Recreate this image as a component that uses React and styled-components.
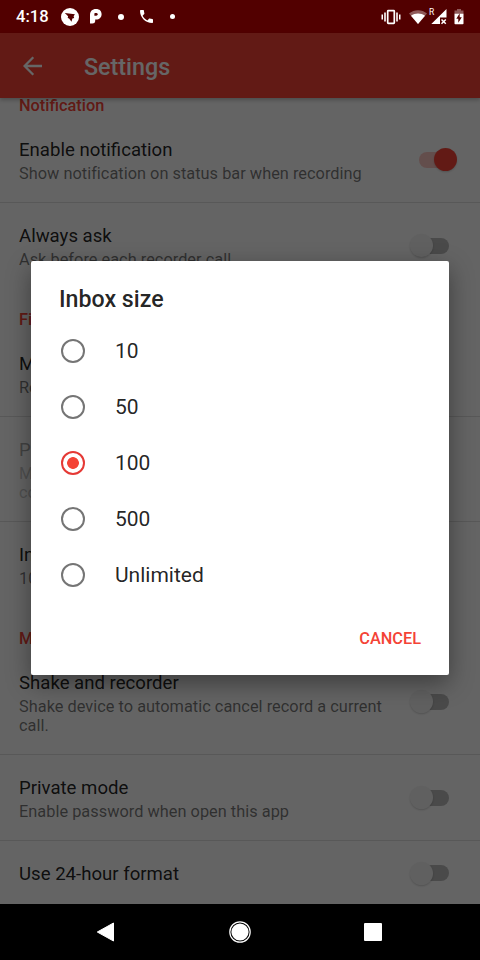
import React, { useState } from 'react'
import styled, { createGlobalStyle } from 'styled-components'

const sizes = ['10', '50', '100', '500', 'Unlimited']

const Toggle = ({ on }) => (
  <Track $on={on}>
    <Thumb $on={on} />
  </Track>
)

const Preference = ({ title, summary, toggle, on, tall, last, disabled }) => (
  <Row $tall={tall} $single={!summary} $last={last} $disabled={disabled}>
    <Labels>
      <RowTitle>{title}</RowTitle>
      {summary ? <Summary>{summary}</Summary> : null}
    </Labels>
    {toggle ? <Toggle on={on} /> : null}
  </Row>
)

const StatusIcons = () => (
  <StatusBar>
    <Clock>4:18</Clock>
    <svg width="18" height="18" viewBox="0 0 18 18">
      <circle cx="9" cy="9" r="9" fill="#fff" />
      <path d="M3.800 5 13.900 6.200 12.600 8.300l.6 1.600-1.800.6-.9 3.200-2.400-3.200-1.400-.5.4-1.800z" fill="#520000" />
    </svg>
    <PIcon width="12" height="15" viewBox="0 0 12 15">
      <path
        d="M0 6.200C0 2.200 2.200 0 6 0s5.600 2.200 5.600 5.300S9.300 10.600 6.200 10.600H5.200V12.200Q5 14.600 2.500 14.600H0z"
        fill="#fff"
      />
      <path d="M5 4h1.300a1.300 1.300 0 0 1 0 2.700H4.400V4.600z" fill="#520000" />
    </PIcon>
    <Dot $size={6} $left={16} />
    <PhoneIcon width="13" height="13" viewBox="3 3 18 18">
      <path
        d="M6.620 10.790c1.440 2.830 3.760 5.140 6.590 6.590l2.200-2.200c.27-.27.67-.36 1.020-.24 1.120.37 2.330.57 3.570.57.55 0 1 .45 1 1V20c0 .55-.45 1-1 1-9.390 0-17-7.610-17-17 0-.55.45-1 1-1h3.500c.55 0 1 .45 1 1 0 1.250.2 2.450.57 3.570.11.35.03.74-.25 1.020z"
        fill="#fff"
      />
    </PhoneIcon>
    <Dot $size={5} $left={17} />
    <Spacer />
    <svg width="20" height="16" viewBox="0 0 20 16" fill="#fff">
      <path d="M.5 5.500h1.500v5H.5zM3.200 3.500h1.600v9H3.200zM15.200 3.500h1.600v9h-1.600zM18 5.500h1.500v5H18z" />
      <rect x="6.700" y="1.700" width="6.600" height="12.600" rx=".6" fill="none" stroke="#fff" strokeWidth="1.700" />
    </svg>
    <WifiIcon width="18" height="14" viewBox="0 0 18 14">
      <path d="M0 3.500C5-1 13-1 18 3.500L9 14z" fill="#fff" opacity=".35" />
      <path d="M2 5.800c4-3.200 10-3.200 14 0L9 14z" fill="#fff" />
    </WifiIcon>
    <Signal>
      <Roaming>R</Roaming>
      <svg width="16" height="16" viewBox="0 0 16 16">
        <path d="M15.500 0v8.600H9V15H.3z" fill="#fff" />
        <path d="m10.500 10.500 4.300 4.300m0-4.300-4.300 4.300" stroke="#fff" strokeWidth="1.500" />
      </svg>
    </Signal>
    <BatteryIcon width="10" height="16" viewBox="0 0 10 16">
      <path d="M3 0h4v1.600h2.500V5H.5V1.600H3z" fill="#fff" opacity=".35" />
      <path d="M.5 4.800h9v9.700q0 .8-.8.800H1.300q-.8 0-.8-.8z" fill="#fff" />
      <path d="M5.700 4.200 2.300 9.800h2v4l3.500-5.600H5.700z" fill="#520000" />
    </BatteryIcon>
  </StatusBar>
)

export default function App() {
  const [size, setSize] = useState('100')

  return (
    <Phone>
      <GlobalStyle />
      <StatusIcons />
      <Screen>
        <AppBar>
          <svg width="20" height="20" viewBox="0 0 20 20">
            <path d="M19 10H2M10.300 1.300 1.600 10l8.700 8.700" fill="none" stroke="#fff" strokeWidth="2.300" />
          </svg>
          <Heading>Settings</Heading>
        </AppBar>
        <List>
          <Category $first>Notification</Category>
          <Preference
            title="Enable notification"
            summary="Show notification on status bar when recording"
            toggle
            on
          />
          <Preference title="Always ask" summary="Ask before each recorder call" toggle last />
          <Category>File</Category>
          <Preference title="M" summary="Re" />
          <Preference title="P" summary={<>M<br />co</>} tall disabled />
          <Preference title="Inbox size" summary="100" last />
          <Category>M</Category>
          <Preference
            title="Shake and recorder"
            summary="Shake device to automatic cancel record a current call."
            toggle
            tall
          />
          <Preference title="Private mode" summary="Enable password when open this app" toggle />
          <Preference title="Use 24-hour format" toggle last />
        </List>
        <Scrim>
          <Dialog role="dialog">
            <DialogTitle>Inbox size</DialogTitle>
            {sizes.map((item) => (
              <Option key={item} onClick={() => setSize(item)}>
                <Radio $checked={item === size} />
                {item}
              </Option>
            ))}
            <Actions>
              <Cancel>Cancel</Cancel>
            </Actions>
          </Dialog>
        </Scrim>
      </Screen>
      <NavBar>
        <svg width="24" height="24" viewBox="0 0 24 24">
          <path d="M19.500 3v18L3.300 12z" fill="#fff" stroke="#fff" strokeLinejoin="round" />
        </svg>
        <svg width="24" height="24" viewBox="0 0 24 24">
          <circle cx="12" cy="12" r="10.200" fill="none" stroke="#fff" strokeWidth="1.200" />
          <circle cx="12" cy="12" r="8.600" fill="#fff" />
        </svg>
        <svg width="24" height="24" viewBox="0 0 24 24">
          <rect x="3" y="3" width="18" height="18" rx="1" fill="#fff" />
        </svg>
      </NavBar>
    </Phone>
  )
}

const GlobalStyle = createGlobalStyle`
  * {
    box-sizing: border-box;
  }
  body {
    margin: 0;
    background: #000;
    font-family: Roboto, 'Liberation Sans', sans-serif;
  }
`

const Phone = styled.div`
  width: 480px;
  height: 960px;
  display: flex;
  flex-direction: column;
  overflow: hidden;
`

const StatusBar = styled.header`
  height: 33px;
  flex: none;
  display: flex;
  align-items: center;
  padding: 0 16px;
  background: #520000;
  color: #fff;
`

const Clock = styled.span`
  width: 45px;
  font-size: 16.600px;
  font-weight: 500;
`

const PIcon = styled.svg`
  margin-left: 11px;
`

const PhoneIcon = styled.svg`
  margin-left: 16px;
`

const Dot = styled.i`
  width: ${({ $size }) => $size}px;
  height: ${({ $size }) => $size}px;
  margin-left: ${({ $left }) => $left}px;
  border-radius: 50%;
  background: #fff;
`

const Spacer = styled.div`
  flex: 1;
`

const WifiIcon = styled.svg`
  margin: 0 4px 0 8px;
`

const Signal = styled.div`
  position: relative;
  display: flex;
`

const Roaming = styled.span`
  position: absolute;
  left: -2px;
  top: -1px;
  font-size: 8.500px;
  line-height: 8px;
`

const BatteryIcon = styled.svg`
  margin-left: 7px;
`

const Screen = styled.main`
  position: relative;
  flex: 1;
  min-height: 0;
  display: flex;
  flex-direction: column;
  background: #fafafa;
`

const AppBar = styled.div`
  position: relative;
  height: 65px;
  flex: none;
  display: flex;
  align-items: center;
  padding-left: 23px;
  background: #f44336;
  color: #fff;
  box-shadow: 0 2px 4px rgba(0, 0, 0, 0.25);
`

const Heading = styled.h1`
  margin: 2px 0 0 41px;
  font-size: 23.300px;
  line-height: 28px;
  font-weight: 500;
`

const List = styled.div`
  flex: 1;
  min-height: 0;
  overflow: hidden;
`

const Category = styled.h2`
  height: ${({ $first }) => ($first ? 19 : 41)}px;
  margin: 0;
  padding: ${({ $first }) => ($first ? 0 : 23.5)}px 19px 0;
  font-size: 16.330px;
  line-height: ${({ $first }) => ($first ? 16 : 14)}px;
  font-weight: 500;
  color: #f44336;
`

const rowHeight = ({ $tall, $single }) => {
  if ($single) return 65
  return $tall ? 105.4 : 86.33
}

const Row = styled.div`
  height: ${rowHeight}px;
  display: flex;
  align-items: center;
  padding: 0 19px;
  border-bottom: 1px solid ${({ $last }) => ($last ? 'transparent' : '#dcdcdc')};

  > * {
    opacity: ${({ $disabled }) => ($disabled ? 0.4 : 1)};
  }
`

const Labels = styled.div`
  flex: 1;
  padding-top: 1.700px;
`

const RowTitle = styled.div`
  font-size: 18.600px;
  line-height: 24px;
  color: rgba(0, 0, 0, 0.87);
`

const Summary = styled.div`
  max-width: 372px;
  font-size: 16.330px;
  line-height: 19px;
  letter-spacing: 0.020px;
  margin-top: 2px;
  color: rgba(0, 0, 0, 0.54);
`

const Track = styled.div`
  width: 32px;
  height: 16px;
  flex: none;
  display: flex;
  align-items: center;
  margin-right: ${({ $on }) => ($on ? 10 : 12)}px;
  justify-content: ${({ $on }) => ($on ? 'flex-end' : 'flex-start')};
  border-radius: 8px;
  background: ${({ $on }) => ($on ? 'rgba(244, 67, 54, 0.3)' : '#b8b8b8')};
`

const Thumb = styled.div`
  width: 23px;
  height: 23px;
  flex: none;
  margin: 0 ${({ $on }) => ($on ? -6 : 0)}px 0 ${({ $on }) => ($on ? 0 : -7)}px;
  border-radius: 50%;
  background: ${({ $on }) => ($on ? '#f44336' : '#f1f1f1')};
  box-shadow: 0 1px 2px rgba(0, 0, 0, 0.18);
`

const Scrim = styled.div`
  position: absolute;
  inset: 0;
  display: flex;
  align-items: center;
  justify-content: center;
  padding-bottom: 2px;
  background: rgba(0, 0, 0, 0.6);
`

const Dialog = styled.div`
  width: 418px;
  height: 414px;
  display: flex;
  flex-direction: column;
  border-radius: 2px;
  background: #fff;
  box-shadow: 0 8px 24px rgba(0, 0, 0, 0.4);
`

const DialogTitle = styled.h2`
  height: 62.500px;
  margin: 0;
  padding: 24px 28px 0;
  font-size: 23.200px;
  line-height: 28px;
  font-weight: 500;
  color: rgba(0, 0, 0, 0.87);
`

const Option = styled.div`
  height: 56px;
  display: flex;
  align-items: center;
  gap: 30px;
  padding: 0 30px;
  font-size: 21px;
  color: rgba(0, 0, 0, 0.87);
`

const Radio = styled.span`
  width: 24px;
  height: 24px;
  flex: none;
  margin-top: -1px;
  border: 2.300px solid ${({ $checked }) => ($checked ? '#e53935' : '#757575')};
  border-radius: 50%;
  background: ${({ $checked }) =>
    $checked ? 'radial-gradient(circle, #f44336 5.500px, transparent 6.200px)' : 'none'};
`

const Actions = styled.div`
  flex: 1;
  display: flex;
  align-items: center;
  justify-content: flex-end;
  padding-right: 28px;
`

const Cancel = styled.button`
  padding: 0;
  border: 0;
  background: none;
  font: 500 16.330px Roboto, 'Liberation Sans', sans-serif;
  text-transform: uppercase;
  color: #f44336;
`

const NavBar = styled.nav`
  height: 56px;
  flex: none;
  display: flex;
  align-items: center;
  justify-content: space-between;
  padding: 0 95px 0 94px;
  background: #000;
`
